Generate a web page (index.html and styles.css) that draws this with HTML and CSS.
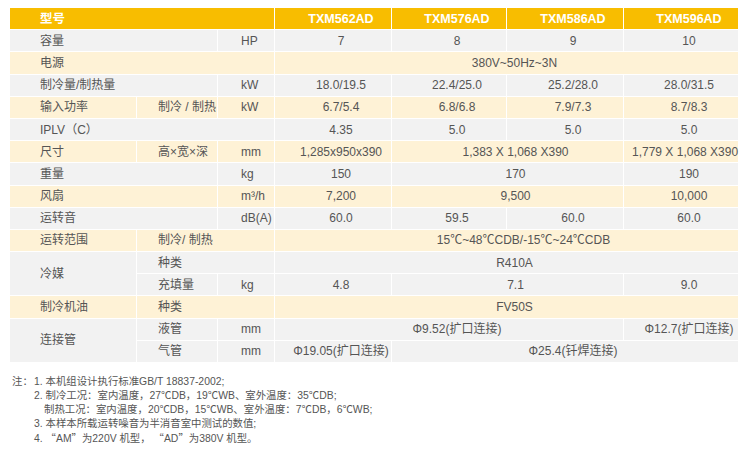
FILE: index.html
```html
<!DOCTYPE html>
<html lang="zh-CN">
<head>
<meta charset="utf-8">
<link rel="stylesheet" href="styles.css">
</head>
<body>
<div class="page">
<table class="spec">
  <colgroup>
    <col class="w-lbl"><col class="w-sub"><col class="w-unit">
    <col class="w-a"><col class="w-b"><col class="w-a"><col class="w-b">
  </colgroup>
  <thead>
    <tr class="head">
      <th colspan="3" class="lbl">型号</th>
      <th>TXM562AD</th><th>TXM576AD</th><th>TXM586AD</th><th>TXM596AD</th>
    </tr>
  </thead>
  <tbody>
    <tr class="g"><td colspan="2" class="lbl">容量</td><td class="unit">HP</td><td>7</td><td>8</td><td>9</td><td>10</td></tr>
    <tr class="c"><td colspan="3" class="lbl">电源</td><td colspan="4">380V~50Hz~3N</td></tr>
    <tr class="g"><td colspan="2" class="lbl">制冷量/制热量</td><td class="unit">kW</td><td>18.0/19.5</td><td>22.4/25.0</td><td>25.2/28.0</td><td>28.0/31.5</td></tr>
    <tr class="c"><td class="lbl">输入功率</td><td class="sub">制冷 / 制热</td><td class="unit">kW</td><td>6.7/5.4</td><td>6.8/6.8</td><td>7.9/7.3</td><td>8.7/8.3</td></tr>
    <tr class="g"><td colspan="3" class="lbl">IPLV（C）</td><td>4.35</td><td>5.0</td><td>5.0</td><td>5.0</td></tr>
    <tr class="c"><td class="lbl">尺寸</td><td class="sub">高×宽×深</td><td class="unit">mm</td><td>1,285x950x390</td><td colspan="2">1,383 X 1,068 X390</td><td class="tight">1,779 X 1,068 X390</td></tr>
    <tr class="g"><td colspan="2" class="lbl">重量</td><td class="unit">kg</td><td>150</td><td colspan="2">170</td><td>190</td></tr>
    <tr class="c"><td colspan="2" class="lbl">风扇</td><td class="unit">m³/h</td><td>7,200</td><td colspan="2">9,500</td><td>10,000</td></tr>
    <tr class="g"><td colspan="2" class="lbl">运转音</td><td class="unit">dB(A)</td><td>60.0</td><td>59.5</td><td>60.0</td><td>60.0</td></tr>
    <tr class="c"><td class="lbl">运转范围</td><td colspan="2" class="sub">制冷/ 制热</td><td colspan="4" class="wide">15℃~48℃CDB/-15℃~24℃CDB</td></tr>
    <tr class="g"><td rowspan="2" class="lbl">冷媒</td><td colspan="2" class="sub">种类</td><td colspan="4">R410A</td></tr>
    <tr class="g"><td class="sub">充填量</td><td class="unit">kg</td><td>4.8</td><td colspan="2">7.1</td><td>9.0</td></tr>
    <tr class="c"><td class="lbl">制冷机油</td><td colspan="2" class="sub">种类</td><td colspan="4">FV50S</td></tr>
    <tr class="g"><td rowspan="2" class="lbl">连接管</td><td class="sub">液管</td><td class="unit">mm</td><td colspan="3">Φ9.52(扩口连接)</td><td>Φ12.7(扩口连接)</td></tr>
    <tr class="g"><td class="sub">气管</td><td class="unit">mm</td><td>Φ19.05(扩口连接)</td><td colspan="3">Φ25.4(钎焊连接)</td></tr>
  </tbody>
</table>

<div class="notes">
  <div class="notes-label">注：</div>
  <div class="notes-list">
    <div>1. 本机组设计执行标准GB/T 18837-2002;</div>
    <div>2. 制冷工况：室内温度，27℃DB，19℃WB、室外温度：35℃DB;</div>
    <div class="indent">制热工况：室内温度，20℃DB，15℃WB、室外温度：7℃DB，6℃WB;</div>
    <div>3. 本样本所载运转噪音为半消音室中测试的数值;</div>
    <div>4. <span class="cjk">“</span>AM<span class="cjk">”</span>为220V 机型， <span class="cjk">“</span>AD<span class="cjk">”</span>为380V 机型。</div>
  </div>
</div>
</div>
</body>
</html>
```

FILE: styles.css
```css
html, body {
  margin: 0;
  padding: 0;
  background: #ffffff;
}

.page {
  padding: 8px 0 0 9px;
  font-family: "Liberation Sans", "Noto Sans CJK SC", sans-serif;
  color: #555555;
}

.spec {
  border-collapse: collapse;
  table-layout: fixed;
  width: 729px;
  font-size: 12px;
}

.w-lbl { width: 127px; }
.w-sub { width: 81px; }
.w-unit { width: 57px; }
.w-a { width: 117px; }
.w-b { width: 115px; }

.spec th,
.spec td {
  border: 1px solid #ffffff;
  padding: 0 0 0 16px;
  height: 21.2px;
  text-align: center;
  vertical-align: middle;
  white-space: nowrap;
  line-height: 14px;
}

.spec tr.head th {
  background: #f8bd00;
  color: #ffffff;
  font-weight: bold;
  font-size: 12.5px;
  border-top: none;
}

.spec tr.g td { background: #f2f2f2; }
.spec tr.c td { background: #fef2d6; }

.spec .lbl {
  text-align: left;
  padding-left: 30px;
}

.spec .sub {
  text-align: left;
  padding-left: 21px;
}

.spec .unit {
  text-align: left;
  padding-left: 23px;
}

.spec .wide {
  padding-left: 34px;
}

.spec .tight {
  padding-left: 8px;
}

.notes {
  display: flex;
  margin: 12px 0 0 3px;
  font-size: 10.4px;
  line-height: 14px;
}

.notes-label {
  width: 22px;
  flex: none;
}

.notes-list .indent {
  padding-left: 10px;
}

.cjk {
  font-family: "Noto Sans CJK SC", sans-serif;
}
```
